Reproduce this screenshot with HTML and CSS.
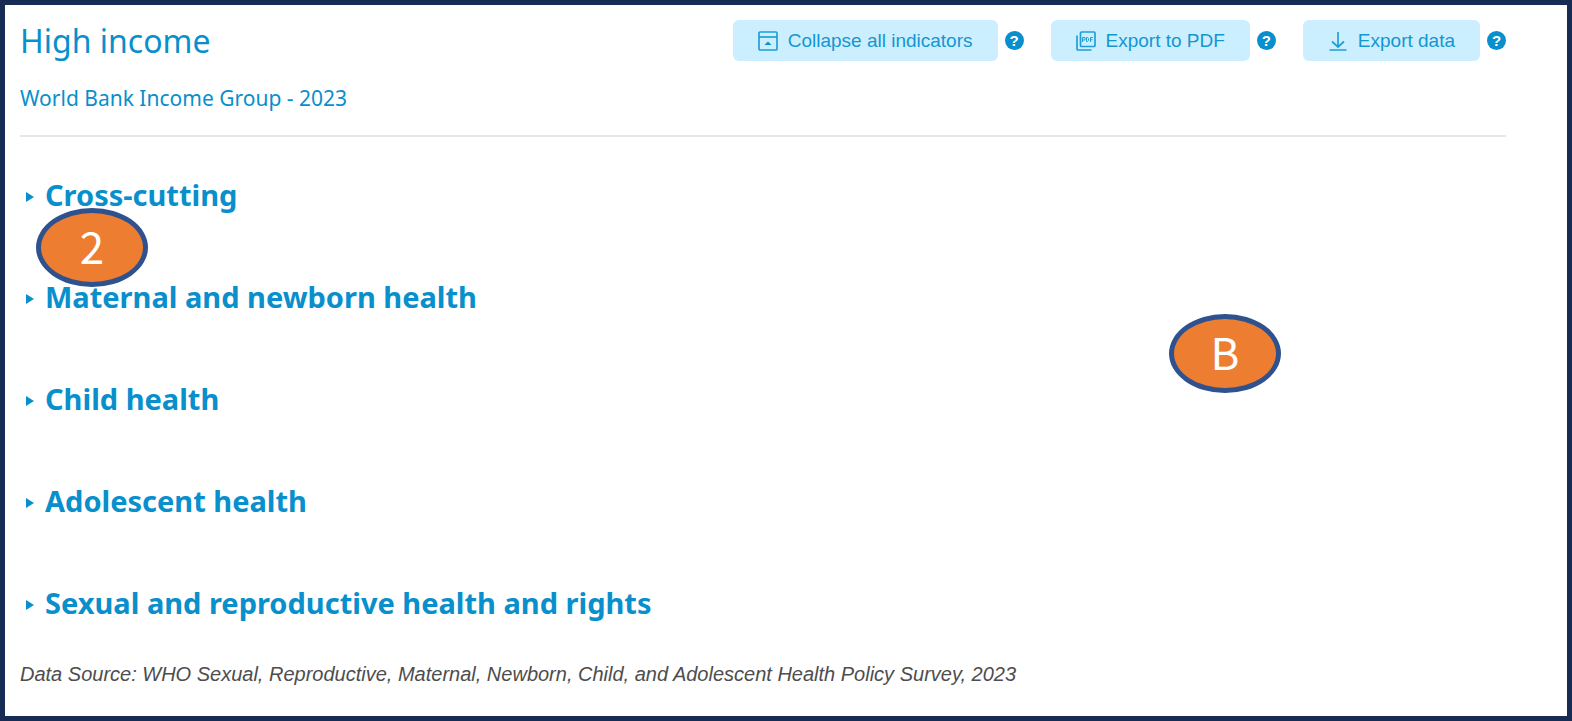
FILE: index.html
```html
<!DOCTYPE html>
<html lang="en">

<head>
    <meta charset="UTF-8">
    <meta name="viewport" content="width=device-width, initial-scale=1.0">
    <title>High income</title>
    <link rel="stylesheet" href="styles.css">
</head>

<body>
    <main class="page">
        <header class="header">
            <div>
                <h1>High income</h1>
                <p class="subtitle">World Bank Income Group - 2023</p>
            </div>
            <div class="actions">
                <div class="action">
                    <button type="button" class="btn">
                        <svg class="icon" viewBox="0 0 20 20">
                            <rect x="1" y="1" width="18" height="18" rx="1" />
                            <path d="M1 6h18" />
                            <path class="solid" d="M6.500 14l3.500-3.500 3.500 3.500z" />
                        </svg>
                        Collapse all indicators
                    </button>
                    <button type="button" class="help" aria-label="Help">?</button>
                </div>
                <div class="action">
                    <button type="button" class="btn">
                        <svg class="icon" viewBox="0 0 20 20">
                            <rect x="4.500" y="1" width="14.500" height="14.500" rx="1" />
                            <path d="M1 4.500V18q0 1 1 1h13.500" />
                            <path class="thin" d="M6.500 11V6.500h2.500v2.500h-2.500M10.500 6.500v4h1l1-1V7.500l-1-1zM14.500 11V6.500h2.500M14.500 8.700h2" />
                        </svg>
                        Export to PDF
                    </button>
                    <button type="button" class="help" aria-label="Help">?</button>
                </div>
                <div class="action">
                    <button type="button" class="btn">
                        <svg class="icon" viewBox="0 0 20 20">
                            <path d="M10 1v15M4 10.500l6 5.500 6-5.500M1.500 19h17" />
                        </svg>
                        Export data
                    </button>
                    <button type="button" class="help" aria-label="Help">?</button>
                </div>
            </div>
        </header>

        <section class="topics">
            <details>
                <summary>Cross-cutting</summary>
            </details>
            <details>
                <summary>Maternal and newborn health</summary>
            </details>
            <details>
                <summary>Child health</summary>
            </details>
            <details>
                <summary>Adolescent health</summary>
            </details>
            <details>
                <summary>Sexual and reproductive health and rights</summary>
            </details>
        </section>

        <p class="source">Data Source: WHO Sexual, Reproductive, Maternal, Newborn, Child, and Adolescent Health Policy Survey, 2023</p>

        <span class="marker marker-2">2</span>
        <span class="marker marker-b">B</span>
    </main>
</body>

</html>
```

FILE: styles.css
```css
* {
    margin: 0;
    padding: 0;
    box-sizing: border-box;
}

body {
    font-family: "Noto Sans", sans-serif;
    color: #088fcc;
    background-color: white;
}

.page {
    position: relative;
    min-height: 100vh;
    padding: 15px 61px 0 15px;
    border: 5px solid #172b53;
}

.header {
    display: flex;
    justify-content: space-between;
    align-items: flex-start;
    height: 117px;
    border-bottom: 2px solid #e6e6e6;
}

h1 {
    font-size: 32px;
    font-weight: 400;
    line-height: 42px;
}

.subtitle {
    margin-top: 21px;
    font-size: 21px;
    line-height: 30px;
}

/* buttons */
.actions {
    display: flex;
    gap: 27px;
}

.action {
    display: flex;
    align-items: center;
    gap: 7px;
}

.btn {
    display: flex;
    align-items: center;
    gap: 10px;
    height: 41px;
    padding: 0 25px;
    border: none;
    border-radius: 6px;
    background-color: #ccefff;
    color: #1496d0;
    font-family: "Liberation Sans", Arial, sans-serif;
    font-size: 19px;
    cursor: pointer;
}

.icon {
    width: 20px;
    height: 20px;
    fill: none;
    stroke: #1f9fd6;
    stroke-width: 1.7;
}

.icon .solid {
    fill: #088fcc;
    stroke: none;
}

.icon .thin {
    stroke-width: 1;
}

.help {
    width: 19px;
    height: 19px;
    border: none;
    border-radius: 50%;
    background-color: #088fcc;
    color: white;
    font-family: "Liberation Sans", Arial, sans-serif;
    font-size: 15px;
    font-weight: 700;
    line-height: 19px;
    cursor: pointer;
}

/* topics */
.topics {
    display: flex;
    flex-direction: column;
    gap: 62px;
    padding: 38px 0 0 6px;
}

summary {
    display: flex;
    align-items: center;
    gap: 11px;
    font-size: 29px;
    font-weight: 700;
    line-height: 40px;
    list-style: none;
    cursor: pointer;
}

summary::before {
    content: "";
    margin-top: 4px;
    border-left: 8px solid #088fcc;
    border-top: 5px solid transparent;
    border-bottom: 5px solid transparent;
}

.source {
    margin-top: 39px;
    color: #4d4d4d;
    font-family: "Liberation Sans", Arial, sans-serif;
    font-size: 20px;
    font-style: italic;
    line-height: 24px;
}

/* callouts lying over the page */
.marker {
    position: absolute;
    width: 112px;
    height: 79px;
    border: 5px solid #2f528f;
    border-radius: 50%;
    background-color: #ed7d31;
    color: white;
    font-family: "Noto Sans CJK SC", sans-serif;
    font-size: 44px;
    line-height: 65px;
    text-align: center;
}

.marker-2 {
    top: 203px;
    left: 31px;
}

.marker-b {
    top: 309px;
    right: 286px;
}
```
